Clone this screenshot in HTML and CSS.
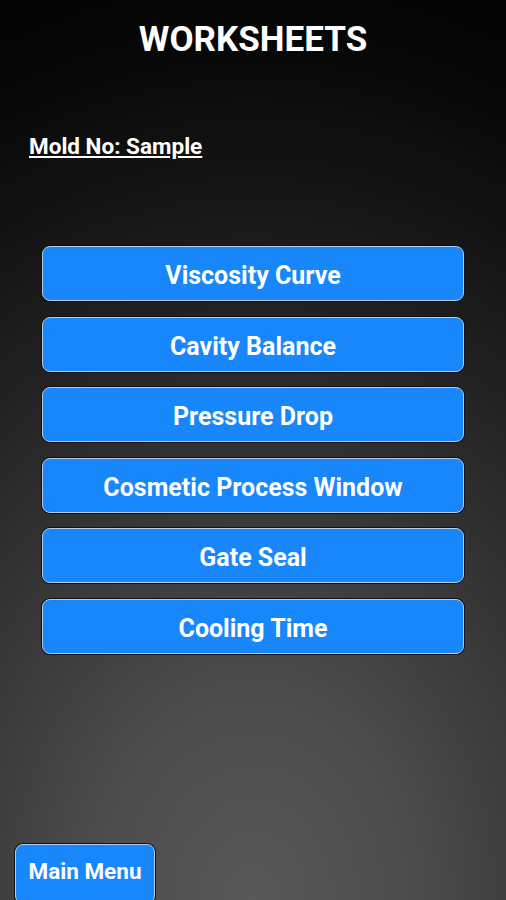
FILE: index.html
```html
<!DOCTYPE html>
<html lang="en">
<head>
    <meta charset="utf-8">
    <meta name="viewport" content="width=device-width, initial-scale=1, maximum-scale=1">
    <title>Worksheets</title>
    <link rel="stylesheet" href="styles.css">
</head>
<body>
    <div class="screen">
        <h1 class="title">WORKSHEETS</h1>
        <div class="mold">Mold No: Sample</div>
        <div class="menu">
            <a href="#" class="btn">Viscosity Curve</a>
            <a href="#" class="btn">Cavity Balance</a>
            <a href="#" class="btn">Pressure Drop</a>
            <a href="#" class="btn">Cosmetic Process Window</a>
            <a href="#" class="btn">Gate Seal</a>
            <a href="#" class="btn">Cooling Time</a>
        </div>
        <div class="footer">
            <a href="#" class="btn btn-small">Main Menu</a>
        </div>
    </div>
</body>
</html>
```

FILE: styles.css
```css
html, body {
    margin: 0;
    padding: 0;
    height: 100%;
}
body {
    font-family: Roboto, "Liberation Sans", Arial, sans-serif;
    background: #000;
    color: white;
    overflow: hidden;
}
.screen {
    height: 900px;
    display: flex;
    flex-direction: column;
    background: radial-gradient(ellipse 160% 115% at 50% 100%, #585858 0%, #4c4c4c 20%, #363636 40%, #1c1c1c 62%, #080808 82%, #000 100%);
}
.title {
    margin: 20px 0 0;
    font-size: 35px;
    font-weight: 700;
    text-align: center;
    line-height: 40px;
}
.mold {
    margin: 73px 0 0 29px;
    font-size: 22.5px;
    font-weight: 700;
    text-decoration: underline;
    line-height: 26px;
}
.menu {
    display: flex;
    flex-direction: column;
    gap: 15.5px;
    margin: 87px 42px 0;
}
.btn {
    display: block;
    height: 55px;
    box-sizing: border-box;
    padding-top: 4px;
    background-color: #1787fb;
    color: white;
    text-align: center;
    text-decoration: none;
    font-size: 25px;
    font-weight: 700;
    border: 1px solid #b3cde8;
    border-radius: 8px;
    box-shadow: 0 0 0 1px #111;
    line-height: 49px;
}
.footer {
    margin-top: auto;
    padding: 0 0 0 15px;
    height: 56px;
}
.btn-small {
    display: inline-block;
    width: 140px;
    height: 60px;
    padding-top: 0;
    line-height: 52px;
    font-size: 22.5px;
}
```
